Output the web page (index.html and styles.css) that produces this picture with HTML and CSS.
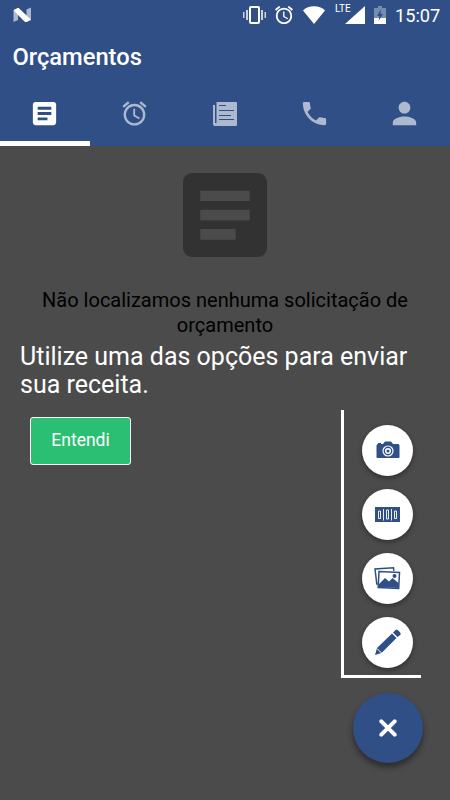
FILE: index.html
```html
<!DOCTYPE html>
<html lang="pt-BR">
<head>
<meta charset="utf-8">
<title>Orçamentos</title>
<link rel="stylesheet" href="styles.css">
</head>
<body>
<div class="screen">
  <header class="header">
    <div class="status">
      <svg class="logo" width="19" height="16" viewBox="0 0 19 16"><path fill="#fff" opacity=".6" d="M.5 3 5 1v12L.5 15zM13.500 2.500 18 .5v12.500l-4.500 2z"/><path fill="#fff" d="M1.500 2.500 5.500.8 18 12.800 13.500 15H12L1 4z"/></svg>
      <svg class="vibrate" width="23" height="18" viewBox="0 0 23 18"><rect x="7" y="1" width="9" height="16" rx="1" fill="none" stroke="#fff" stroke-width="2"/><path fill="#fff" opacity=".75" d="M0 6h1.500v6H0zM3 4h2v10H3zM18 4h2v10h-2zM21.500 6H23v6h-1.500z"/></svg>
      <svg class="alarm-small" width="18" height="18" viewBox="2 2 20 20"><use href="#alarm" fill="#fff"/></svg>
      <svg class="wifi" width="22" height="18" viewBox="0 0 22 18"><path fill="#fff" d="M0 4.500Q4.500.3 11 .3t11 4.200L11 18z"/></svg>
      <div class="signal"><span class="lte">LTE</span><svg width="21" height="18" viewBox="0 0 21 18"><path fill="#fff" d="M20 0v18H0z"/></svg></div>
      <svg class="battery" width="12" height="18" viewBox="0 0 12 18"><path fill="#fff" opacity=".35" d="M4 0h4v2h4v10H0V2h4z"/><path fill="#fff" d="M0 12h12v6H0z"/><path fill="#314f87" d="M7 3 3 10h2.500L4.500 15 9 8H6.500z"/></svg>
      <span class="clock">15:07</span>
    </div>
    <h1 class="title">Orçamentos</h1>
    <nav class="tabs">
      <a class="tab active"><svg width="31" height="31" viewBox="0 0 24 24"><use href="#article"/></svg></a>
      <a class="tab"><svg width="29" height="29" viewBox="0 0 24 24"><use href="#alarm"/></svg></a>
      <a class="tab"><svg width="24" height="24" viewBox="0 0 24 24"><path d="M3.500 0H23q1 0 1 1v22q0 1-1 1H2a2 2 0 0 1-2-2V3h2v18h1.500z"/><path fill="none" stroke="#314f87" d="M6 3.500h7M6 8.500h15M6 13.500h12M6 17.500h15"/></svg></a>
      <a class="tab"><svg width="31" height="31" viewBox="0 0 24 24"><path d="M6.620 10.790c1.440 2.830 3.760 5.140 6.590 6.590l2.200-2.200c.27-.27.670-.36 1.020-.24 1.120.37 2.330.57 3.570.57.550 0 1 .45 1 1V20c0 .55-.45 1-1 1-9.390 0-17-7.610-17-17 0-.55.450-1 1-1h3.500c.55 0 1 .45 1 1 0 1.250.2 2.450.57 3.570.11.350.03.740-.25 1.020z"/></svg></a>
      <a class="tab"><svg width="35" height="35" viewBox="0 0 24 24"><path d="M12 12c2.210 0 4-1.790 4-4s-1.790-4-4-4-4 1.790-4 4 1.790 4 4 4zm0 2c-2.670 0-8 1.340-8 4v2h16v-2c0-2.660-5.330-4-8-4z"/></svg></a>
    </nav>
  </header>
  <main class="content">
    <svg class="empty-icon" width="84" height="84" viewBox="3 3 18 18"><use href="#article"/></svg>
    <p class="empty-text">Não localizamos nenhuma solicitação de<br>orçamento</p>
    <p class="hint">Utilize uma das opções para enviar<br>sua receita.</p>
    <div class="actions">
      <button class="confirm">Entendi</button>
      <div class="dial">
        <button class="mini"><svg width="24" height="18" viewBox="0 0 24 18"><path d="M2 3V2h3v1h2l2-2.500h6L17 3h5q1.500 0 1.500 1.500V16q0 1-1 1h-21q-1 0-1-1V4.500Q.5 3 2 3z"/><circle cx="12" cy="10" r="5" fill="none" stroke="#fff" stroke-width="1.200"/><circle cx="12" cy="10" r="2.300" fill="none" stroke="#fff" stroke-width="1.500"/></svg></button>
        <button class="mini"><svg width="25" height="15" viewBox="0 0 25 15"><path d="M0 0h25v15H0z"/><path fill="none" stroke="#fff" stroke-width=".9" d="M3.500 4h2v7.500h-2zM11.500 3h2v9h-2zM19.500 4h2v7.500h-2zM8.500 2v11.500M16.500 2v11.500"/></svg></button>
        <button class="mini"><svg width="27" height="23" viewBox="0 0 27 23"><path fill="none" stroke="#314f87" stroke-width="1.500" d="M3.500 17H2.800L1 2l18.500-1.200.4 3M5 4.500l20.500 1-.8 16L4.200 20.500z"/><path d="m5 17 6-6 4 3.500 3.500-3.500 6 5v5L5 20z"/><circle cx="20.500" cy="9" r="2"/></svg></button>
        <button class="mini"><svg width="28" height="28" viewBox="0 0 28 28"><path d="m1 27 2-7L18 5.500l4.500 4.500L7.500 25zM19 4.500l2.500-2.500q1-1 2.500.3l2 2q1.300 1.400.3 2.700L23.500 9z"/><path fill="none" stroke="#fff" d="m3 20.500 5 5"/></svg></button>
      </div>
    </div>
    <button class="fab"><svg width="18" height="18" viewBox="0 0 18 18"><path fill="none" stroke="#fff" stroke-width="4" stroke-linecap="round" d="m2.300 2.300 13.400 13.400m0-13.400L2.300 15.700"/></svg></button>
  </main>
</div>
<svg class="symbols" width="0" height="0">
  <defs>
    <path id="article" d="M19 3H5c-1.100 0-2 .9-2 2v14c0 1.100.9 2 2 2h14c1.100 0 2-.9 2-2V5c0-1.100-.9-2-2-2zm-4.700 14.300H6.700V15h7.600v2.300zm3-4.100H6.700v-2.300h10.600v2.300zm0-4.200H6.700V6.800h10.600V9z"/>
    <path id="alarm" d="M22 5.720l-4.600-3.860-1.290 1.530 4.600 3.860L22 5.720zM7.880 3.390L6.600 1.860 2 5.710l1.290 1.530 4.590-3.850zM12.500 8H11v6l4.750 2.850.75-1.230-4-2.370V8zM12 4c-4.970 0-9 4.030-9 9s4.020 9 9 9 9-4.030 9-9-4.030-9-9-9zm0 16c-3.870 0-7-3.130-7-7s3.130-7 7-7 7 3.130 7 7-3.130 7-7 7z"/>
  </defs>
</svg>
</body>
</html>
```
FILE: styles.css
```css
* { box-sizing: border-box; }
body { margin: 0; font-family: Roboto, "Liberation Sans", sans-serif; }
h1, p { margin: 0; }
button { border: 0; padding: 0; font: inherit; }
svg { display: block; flex: none; }
.symbols { position: absolute; }
.screen { width: 450px; height: 800px; display: flex; flex-direction: column; background: #4b4b4b; overflow: hidden; }
.header { height: 146px; flex: none; display: flex; flex-direction: column; background: #314f87; color: #fff; }
.status { height: 30px; display: flex; align-items: center; padding: 0 10px 0 13px; }
.logo { margin-right: auto; }
.alarm-small { margin-left: 9px; }
.wifi { margin-left: 10px; }
.signal { position: relative; margin-left: 20px; }
.lte { position: absolute; left: -10px; top: -3px; font-size: 10px; line-height: 11px; }
.battery { margin-left: 8px; }
.clock { width: 45px; margin-left: 9px; padding-top: 1px; font-size: 18.200px; line-height: 30px; font-weight: 400; }
.title { height: 52px; padding-left: 12.500px; font-size: 23.700px; line-height: 54px; font-weight: 500; }
.tabs { flex: 1; display: grid; grid-template-columns: repeat(5, 1fr); }
.tab { display: flex; align-items: center; justify-content: center; border-bottom: 5px solid transparent; padding: 4px 1px 0 0; fill: #adb9cf; }
.tab.active { fill: #fff; border-color: #fff; }
.content { flex: 1; display: flex; flex-direction: column; padding-top: 27px; }
.empty-icon { align-self: center; fill: #323232; }
.empty-text { margin-top: 31px; text-align: center; font-size: 20px; line-height: 25px; color: #000; }
.hint { margin: 5px 0 0 20px; font-size: 25px; line-height: 28px; color: #fff; white-space: nowrap; }
.actions { display: flex; justify-content: space-between; align-items: flex-start; margin-top: 11px; padding: 0 29px 0 30px; }
.confirm { width: 101px; height: 48px; margin-top: 7px; padding-bottom: 2px; border: 1.500px solid #fff; border-radius: 3px; background: #2bbf74; color: #fff; font-size: 17.500px; }
.dial { width: 80px; height: 268px; display: flex; flex-direction: column; gap: 13px; padding: 14.500px 0 0 18px; border: solid #fff; border-width: 0 0 3px 3px; }
.mini { width: 51px; height: 51px; flex: none; display: flex; align-items: center; justify-content: center; border-radius: 50%; background: #fff; fill: #314f87; box-shadow: 0 2px 5px rgba(0, 0, 0, .4); }
.fab { width: 70px; height: 70px; flex: none; display: flex; align-items: center; justify-content: center; align-self: flex-end; margin: 14.500px 27.500px 0 0; border-radius: 50%; background: #314f87; box-shadow: 0 4px 6px rgba(0, 0, 0, .45); }
```
